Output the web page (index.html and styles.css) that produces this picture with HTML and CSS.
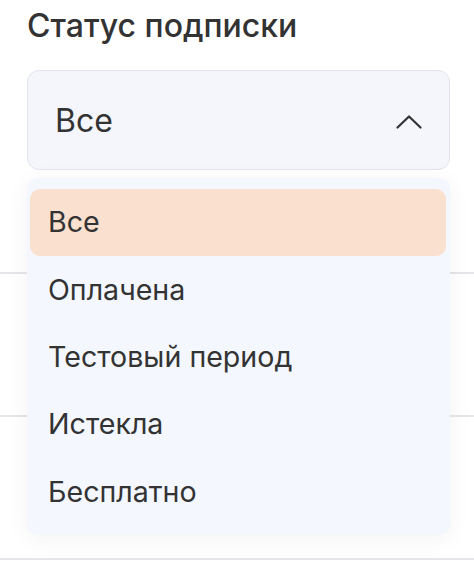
FILE: index.html
```html
<!DOCTYPE html>
<html lang="ru">
<head>
  <meta charset="UTF-8">
  <meta name="viewport" content="width=device-width, initial-scale=1.0" />
  <title>Статус подписки</title>
  <link rel="stylesheet" href="styles.css">
</head>
<body>
  <div class="filters">
    <div class="filter-group">
      <label class="filter-label" for="status">Статус подписки</label>
      <div class="select-box" id="status">
        <span class="select-value">Все</span>
        <svg class="select-arrow" width="26" height="14" viewBox="0 0 26 14">
          <path d="M1.5 12.5 L13 1.5 L24.5 12.5" fill="none" stroke="#333" stroke-width="2.2" stroke-linecap="round" stroke-linejoin="round" />
        </svg>
      </div>
    </div>
    <div class="filter-group empty"></div>
    <div class="filter-group empty"></div>

    <ul class="dropdown">
      <li class="dropdown-item active">Все</li>
      <li class="dropdown-item">Оплачена</li>
      <li class="dropdown-item">Тестовый период</li>
      <li class="dropdown-item">Истекла</li>
      <li class="dropdown-item">Бесплатно</li>
    </ul>
  </div>
</body>
</html>
```

FILE: styles.css
```css
body {
  margin: 0;
  background: #fff;
  font-family: 'Inter', 'Noto Sans', sans-serif;
  color: #333;
}

.filters {
  position: relative;
}

.filter-group {
  height: 274px;
  padding: 0 24px 0 27px;
  border-bottom: 2px solid #e5e5ea;
  box-sizing: border-box;
}

.filter-group.empty {
  height: 143px;
}

.filter-label {
  display: block;
  padding-top: 6px;
  font-size: 32px;
  font-weight: 500;
  line-height: 40px;
  margin-bottom: 24px;
}

.select-box {
  display: flex;
  align-items: center;
  justify-content: space-between;
  height: 100px;
  padding: 0 27px 0 27px;
  box-sizing: border-box;
  background: #f4f6fc;
  border: 1px solid #e1e4eb;
  border-radius: 12px;
}

.select-value {
  font-size: 32px;
}

.select-arrow {
  margin-top: 4px;
}

.dropdown {
  position: absolute;
  top: 178px;
  left: 27px;
  width: 423px;
  margin: 0;
  padding: 11px 4px 9px 3px;
  box-sizing: border-box;
  list-style: none;
  background: #f4f7fe;
  border-radius: 10px;
  box-shadow: 0 4px 24px rgba(0, 0, 0, 0.05);
}

.dropdown-item {
  display: flex;
  align-items: center;
  height: 67.4px;
  padding-left: 18px;
  padding-bottom: 2px;
  box-sizing: border-box;
  font-size: 28.6px;
  border-radius: 10px;
}

.dropdown-item.active {
  background: #fae0ce;
}
```
